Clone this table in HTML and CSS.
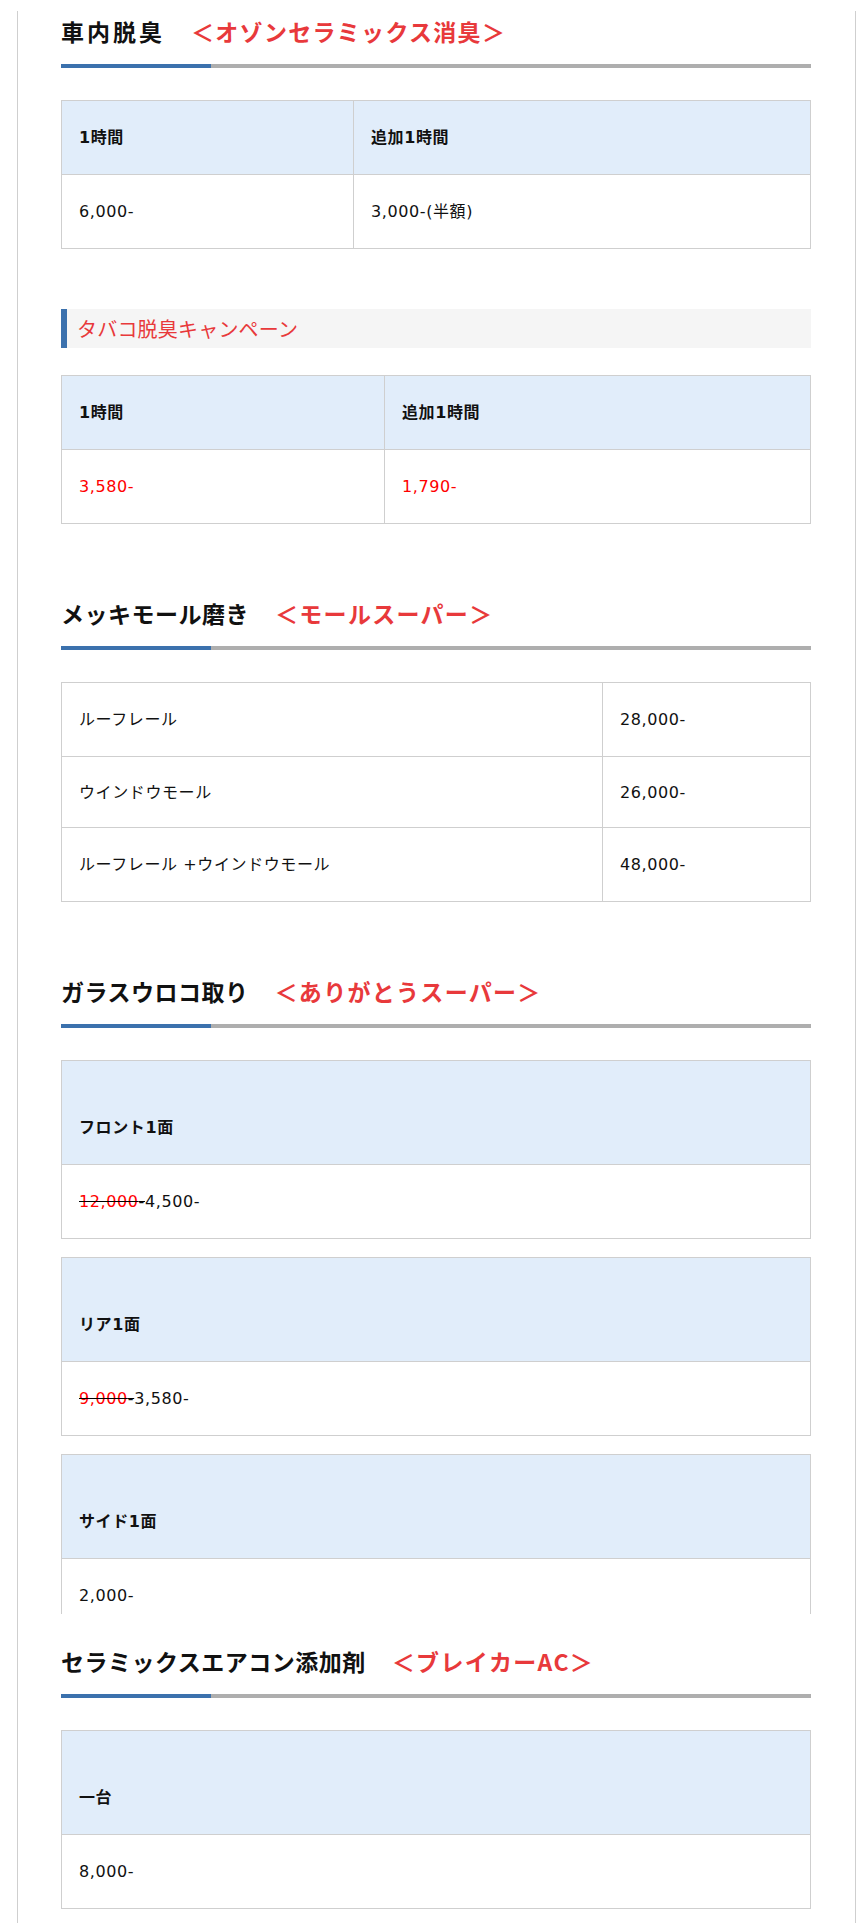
FILE: index.html
```html
<!DOCTYPE html>
<html lang="ja">
<head>
<meta charset="utf-8">
<title>料金表</title>
<link rel="stylesheet" href="styles.css">
</head>
<body>
<div class="page">
  <section class="sec first">
    <h2 class="sec-title"><span class="main wide">車内脱臭</span><span class="sub">＜オゾンセラミックス消臭＞</span></h2>
    <table class="price">
      <colgroup><col class="c-292"><col></colgroup>
      <tr class="head"><th>1時間</th><th>追加1時間</th></tr>
      <tr><td>6,000-</td><td>3,000-(半額)</td></tr>
    </table>
    <h3 class="campaign">タバコ脱臭キャンペーン</h3>
    <table class="price after-h3">
      <colgroup><col class="c-323"><col></colgroup>
      <tr class="head"><th>1時間</th><th>追加1時間</th></tr>
      <tr><td class="red">3,580-</td><td class="red">1,790-</td></tr>
    </table>
  </section>

  <section class="sec">
    <h2 class="sec-title"><span class="main">メッキモール磨き</span><span class="sub">＜モールスーパー＞</span></h2>
    <table class="price">
      <colgroup><col><col class="c-208"></colgroup>
      <tr><td>ルーフレール</td><td>28,000-</td></tr>
      <tr class="short"><td>ウインドウモール</td><td>26,000-</td></tr>
      <tr><td>ルーフレール +ウインドウモール</td><td>48,000-</td></tr>
    </table>
  </section>

  <section class="sec">
    <h2 class="sec-title"><span class="main">ガラスウロコ取り</span><span class="sub">＜ありがとうスーパー＞</span></h2>
    <table class="price tall">
      <tr class="head"><th>フロント1面</th></tr>
      <tr><td><span class="was"><span class="red">12,000</span>-</span>4,500-</td></tr>
    </table>
    <table class="price tall stack">
      <tr class="head"><th>リア1面</th></tr>
      <tr><td><span class="was"><span class="red">9,000</span>-</span>3,580-</td></tr>
    </table>
    <div class="clip">
      <table class="price tall">
        <tr class="head"><th>サイド1面</th></tr>
        <tr><td>2,000-</td></tr>
      </table>
    </div>
  </section>

  <section class="sec resumed">
    <h2 class="sec-title"><span class="main">セラミックスエアコン添加剤</span><span class="sub">＜ブレイカーAC＞</span></h2>
    <table class="price tall">
      <tr class="head"><th>一台</th></tr>
      <tr><td>8,000-</td></tr>
    </table>
  </section>
</div>
</body>
</html>
```

FILE: styles.css
```css
html, body {
  margin: 0;
  padding: 0;
  background: #ffffff;
}

body {
  font-family: "Noto Sans CJK JP", sans-serif;
  color: #111111;
}

.page {
  box-sizing: border-box;
  width: 839px;
  margin: 11px 0 0 17px;
  padding: 4px 44px 40px 43px;
  border-left: 1px solid #cfcfcf;
  border-right: 1px solid #cfcfcf;
  min-height: 1912px;
}

.sec-title {
  margin: 73px 0 0;
  padding: 0 0 20px;
  font-size: 23px;
  line-height: 33px;
  font-weight: 700;
  color: #111111;
  background: linear-gradient(to right, #3b71ad 150px, #aeaeae 150px) left bottom / 100% 4px no-repeat;
}

.first .sec-title {
  margin-top: 0;
}

.resumed .sec-title {
  margin-top: 31px;
}

.main {
  letter-spacing: 0.5px;
}

.main.wide {
  letter-spacing: 3px;
}

.sub {
  margin-left: 26px;
  color: #e8393b;
  letter-spacing: 1.3px;
}

.price {
  width: 100%;
  margin-top: 32px;
  border-collapse: collapse;
  font-family: "DejaVu Sans", "Noto Sans CJK JP", sans-serif;
  font-size: 16px;
  letter-spacing: 0.6px;
  color: #111111;
}

.price th,
.price td {
  border: 1px solid #cfcfcf;
  padding: 26px 17px;
  line-height: 21px;
  text-align: left;
  vertical-align: middle;
}

.price th {
  font-weight: 700;
  background: #e1edfa;
}

.price .short td {
  padding-top: 25px;
  padding-bottom: 24px;
}

.price.tall th {
  padding-top: 56px;
}

.price.stack {
  margin-top: 18px;
}

.c-292 { width: 292px; }
.c-323 { width: 323px; }
.c-208 { width: 208px; }

.red {
  color: #ff0000;
}

.was {
  text-decoration: line-through;
  text-decoration-color: #000000;
}

.campaign {
  margin: 60px 0 0;
  padding: 0 0 0 10px;
  border-left: 6px solid #3b71ad;
  background: #f5f5f5;
  font-size: 20px;
  line-height: 39px;
  font-weight: 400;
  letter-spacing: 0.2px;
  color: #e8393b;
}

.price.after-h3 {
  margin-top: 27px;
}

.clip {
  margin-top: 18px;
  height: 160px;
  overflow: hidden;
}

.clip .price {
  margin-top: 0;
}
```
